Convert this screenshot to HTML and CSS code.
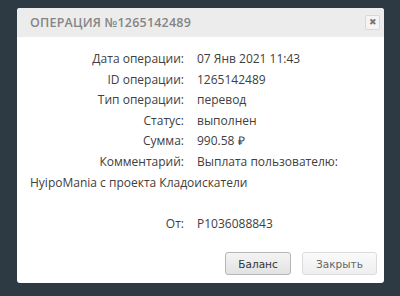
FILE: index.html
```html
<!DOCTYPE html>
<html lang="ru">
<head>
    <meta charset="UTF-8">
    <title>Операция</title>
    <link rel="stylesheet" href="styles.css">
</head>
<body>
    <!-- окно операции -->
    <div class="modal">
        <div class="modal-header">
            <span class="modal-title">Операция №1265142489</span>
            <button class="close-btn">&#10006;</button>
        </div>

        <div class="modal-body">
            <div class="row"><span class="label">Дата операции:</span><span>07 Янв 2021 11:43</span></div>
            <div class="row"><span class="label">ID операции:</span><span>1265142489</span></div>
            <div class="row"><span class="label">Тип операции:</span><span>перевод</span></div>
            <div class="row"><span class="label">Статус:</span><span>выполнен</span></div>
            <div class="row"><span class="label">Сумма:</span><span>990.58 &#8381;</span></div>
            <div class="row"><span class="label">Комментарий:</span><span>Выплата пользователю:</span></div>
            <div class="row">HyipoMania с проекта Кладоискатели</div>
            <div class="row spaced"><span class="label">От:</span><span>P1036088843</span></div>
        </div>

        <div class="modal-footer">
            <button class="btn">Баланс</button>
            <button class="btn btn-light">Закрыть</button>
        </div>
    </div>
</body>
</html>
```

FILE: styles.css
```css
* {
    box-sizing: border-box;
}

body {
    margin: 0;
    height: 296px;
    background: #2d3a44;
    font-family: 'Open Sans', sans-serif;
    padding: 8px 16px 0 17px;
}

.modal {
    width: 367px;
    height: 275px;
    background: #fff;
    border-radius: 3px;
    overflow: hidden;
    display: flex;
    flex-direction: column;
}

.modal-header {
    height: 29px;
    background: #ececec;
    display: flex;
    align-items: center;
    justify-content: space-between;
    padding: 0 4px 0 13px;
}

.modal-title {
    font-size: 12.5px;
    font-weight: 600;
    text-transform: uppercase;
    letter-spacing: 0.2px;
    color: #858585;
}

.close-btn {
    width: 15px;
    height: 15px;
    padding: 0;
    border: 1px solid #d8d8d8;
    border-radius: 2px;
    background: #f4f4f4;
    color: #777;
    font-size: 9px;
    line-height: 13px;
}

.modal-body {
    flex: 1;
    padding: 12px 13px 0 13px;
    font-size: 12px;
    color: #404040;
}

.row {
    line-height: 20.6px;
}

.row.spaced {
    margin-top: 20.6px;
}

.label {
    display: inline-block;
    width: 154px;
    text-align: right;
    margin-right: 13px;
}

.modal-footer {
    display: flex;
    justify-content: flex-end;
    gap: 11px;
    padding: 0 7px 8px 0;
}

.btn {
    width: 66px;
    height: 23px;
    font-family: 'DejaVu Sans', sans-serif;
    font-size: 10.5px;
    color: #333;
    background: linear-gradient(#f4f4f4, #e2e2e2);
    border: 1px solid #b5b5b5;
    border-radius: 3px;
}

.btn-light {
    width: 75px;
    color: #666;
    background: linear-gradient(#fafafa, #efefef);
    border-color: #dcdcdc;
}
```
